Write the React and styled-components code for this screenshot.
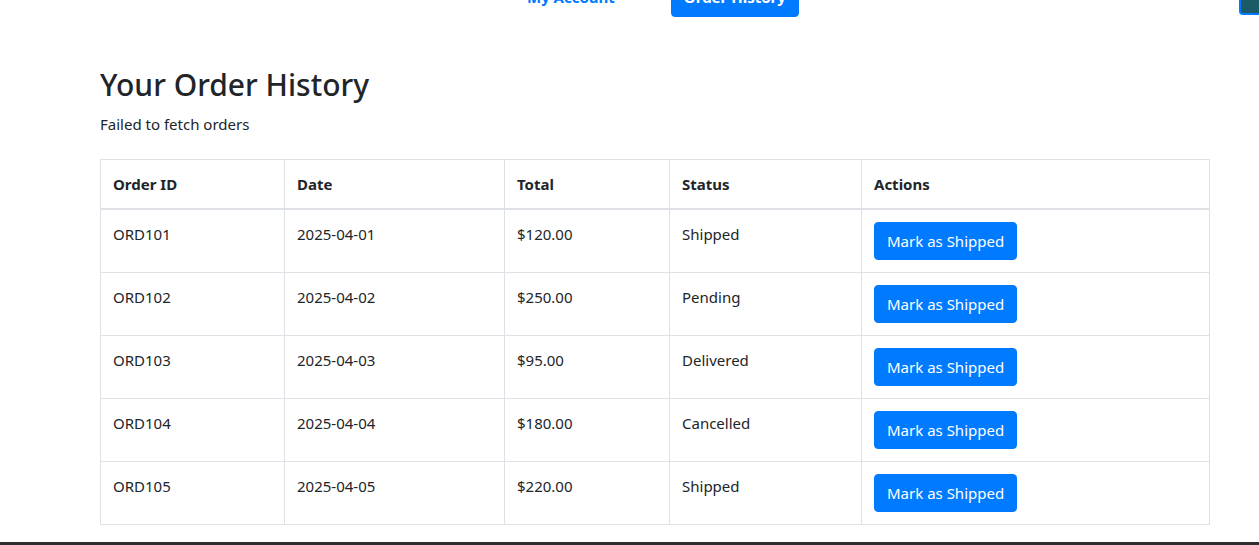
import React from 'react';
import styled, { createGlobalStyle } from 'styled-components';

const GlobalStyle = createGlobalStyle`
  body {
    margin: 0;
    background: #fff;
    color: #212529;
    font-family: "Noto Sans", "Open Sans", Arial, sans-serif;
    font-size: 15px;
    line-height: 24px;
    overflow: hidden;
  }
`;

const Nav = styled.nav`
  display: flex;
  align-items: flex-start;
  margin-top: -21px;
  padding-left: 512px;
  height: 38px;
`;

const NavLink = styled.a`
  display: block;
  padding: 6px 15px;
  color: #007bff;
  font-weight: 700;
  text-decoration: none;
  margin-right: 41px;
`;

const NavButton = styled.button`
  height: 38px;
  padding: 5px 12px 7px;
  border: 1px solid #007bff;
  border-radius: 4px;
  background: #007bff;
  color: #fff;
  font: inherit;
  font-weight: 700;
`;

const CornerButton = styled.div`
  margin-left: auto;
  width: 18px;
  height: 34px;
  background: #1d5a68;
  border-left: 2px solid #007bff;
  border-bottom: 2px solid #007bff;
  border-bottom-left-radius: 4px;
  overflow: hidden;
`;

const Container = styled.main`
  width: 1110px;
  margin: 49px 0 0 100px;
`;

const Title = styled.h2`
  margin: 0 0 8px;
  font-size: 30px;
  font-weight: 500;
  line-height: 38px;
`;

const Message = styled.p`
  margin: 0 0 23px;
`;

const Table = styled.table`
  width: 1110px;
  border-collapse: collapse;
  table-layout: fixed;
  border: 1px solid #dee2e6;
  margin-bottom: 17px;
`;

const Th = styled.th`
  width: ${p => p.$w ? `${p.$w - 25}px` : 'auto'};
  padding: 12px;
  text-align: left;
  vertical-align: top;
  font-weight: 700;
  border: 1px solid #dee2e6;
  border-bottom: 2px solid #dee2e6;
`;

const Td = styled.td`
  padding: 12px;
  vertical-align: top;
  border: 1px solid #dee2e6;
`;

const ActionButton = styled.button`
  height: 38px;
  padding: 6px 12px;
  border: 1px solid #007bff;
  border-radius: 4px;
  background: #007bff;
  color: #fff;
  font: inherit;
  cursor: pointer;
`;

const Footer = styled.footer`
  height: 4px;
  background: #2c2d2f;
`;

const orders = [
  { id: 'ORD101', date: '2025-04-01', total: '$120.00', status: 'Shipped' },
  { id: 'ORD102', date: '2025-04-02', total: '$250.00', status: 'Pending' },
  { id: 'ORD103', date: '2025-04-03', total: '$95.00', status: 'Delivered' },
  { id: 'ORD104', date: '2025-04-04', total: '$180.00', status: 'Cancelled' },
  { id: 'ORD105', date: '2025-04-05', total: '$220.00', status: 'Shipped' },
];

function App() {
  return (
    <>
      <GlobalStyle />
      <Nav>
        <NavLink href="#">My Account</NavLink>
        <NavButton>Order History</NavButton>
        <CornerButton>
          <svg width="18" height="34" viewBox="0 0 18 34">
            <path d="M12 -2 L17 4" stroke="#cfe3e8" strokeWidth="1.5" fill="none" />
          </svg>
        </CornerButton>
      </Nav>
      <Container>
        <Title>Your Order History</Title>
        <Message>Failed to fetch orders</Message>
        <Table>
          <thead>
            <tr>
              <Th $w={184}>Order ID</Th>
              <Th $w={220}>Date</Th>
              <Th $w={165}>Total</Th>
              <Th $w={192}>Status</Th>
              <Th>Actions</Th>
            </tr>
          </thead>
          <tbody>
            {orders.map(o => (
              <tr key={o.id}>
                <Td>{o.id}</Td>
                <Td>{o.date}</Td>
                <Td>{o.total}</Td>
                <Td>{o.status}</Td>
                <Td><ActionButton>Mark as Shipped</ActionButton></Td>
              </tr>
            ))}
          </tbody>
        </Table>
      </Container>
      <Footer />
    </>
  );
}

export default App;
